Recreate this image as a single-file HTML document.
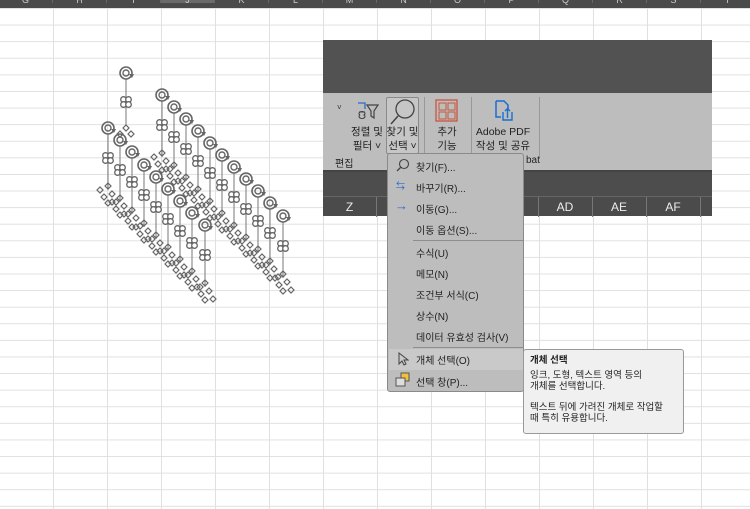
<!DOCTYPE html>
<html><head><meta charset="utf-8"><style>
*{margin:0;padding:0;box-sizing:border-box}
body{width:750px;height:509px;overflow:hidden;background:#fff;position:relative;font-family:"Liberation Sans","Noto Sans CJK KR",sans-serif;color:#222}
.grid{position:absolute;left:0;top:8px;width:750px;height:501px;
background-image:linear-gradient(90deg,#e0e0e0 1px,transparent 1px),linear-gradient(#e0e0e0 1px,transparent 1px);
background-size:54px 16.6px;background-position:-1px 0,0 0}
.colhdr{position:absolute;left:0;top:0;width:750px;height:8px;background:#4a4a4a;overflow:hidden;font-size:9px;color:#ccc}
.colhdr span{position:absolute;top:-5px;width:54px;text-align:center;border-right:1px solid #666;height:8px}
.abs{position:absolute}
.win{position:absolute;left:323px;top:40px;width:389px;height:176px;background:#525252}
.rib{position:absolute;left:0;top:53px;width:389px;height:77px;background:#bdbdbd}
.bar{position:absolute;left:0;top:130px;width:389px;height:26px;background:#4d4d4d;border-top:2px solid #444}
.hdr{position:absolute;left:0;top:156px;width:389px;height:20px;background:#4b4b4b;border-top:1px solid #666;color:#eee;font-size:12px}
.hdr span{position:absolute;top:3px;text-align:center}
.rt{font-size:10.5px;color:#222;text-align:center;line-height:14px;position:absolute}
.menu{position:absolute;left:387px;top:153px;width:137px;height:239px;background:#bdbdbd;border:1px solid #8a8a8a;border-radius:3px;font-size:10px;color:#222}
.mi{position:absolute;left:28px}
.sep{position:absolute;left:25px;width:110px;height:1px;background:#8e8e8e}
.tip{position:absolute;left:523px;top:349px;width:161px;height:85px;background:#f0f0f0;border:1px solid #999;border-radius:3px;font-size:9.5px;line-height:11px;color:#222;padding:5px 6px}
</style></head><body>
<div class="grid"></div>
<div class="colhdr">
<span style="left:-1px">G</span><span style="left:53px">H</span><span style="left:107px">I</span><span style="left:161px;background:#6a6a6a">J</span><span style="left:215px">K</span><span style="left:269px">L</span><span style="left:323px">M</span><span style="left:377px">N</span><span style="left:431px">O</span><span style="left:485px">P</span><span style="left:539px">Q</span><span style="left:593px">R</span><span style="left:647px">S</span><span style="left:701px">T</span>
</div>

<svg class="abs" style="left:0;top:0" width="320" height="320" viewBox="0 0 320 320">
<defs>
<g id="rot"><circle r="6" fill="none" stroke="#666" stroke-width="1.6"/><circle r="3" fill="none" stroke="#666" stroke-width="1.4"/><path d="M3 1 L8 1 L6 5Z" fill="#666"/></g>
<g id="knob"><circle cx="-2.5" cy="-2.5" r="2.8" fill="#fff" stroke="#666" stroke-width="1.3"/><circle cx="2.5" cy="-2.5" r="2.8" fill="#fff" stroke="#666" stroke-width="1.3"/><circle cx="-2.5" cy="2.5" r="2.8" fill="#fff" stroke="#666" stroke-width="1.3"/><circle cx="2.5" cy="2.5" r="2.8" fill="#fff" stroke="#666" stroke-width="1.3"/></g>
<g id="ar"><path d="M-3 0 L0 -3 L3 0 L0 3Z" fill="none" stroke="#666" stroke-width="1.2"/></g>
<g id="item"><line x1="0" y1="6" x2="0" y2="62" stroke="#777" stroke-width="1"/><use href="#rot"/><use href="#knob" y="30"/>
<use href="#ar" x="-8" y="62"/><use href="#ar" x="0" y="58"/><use href="#ar" x="-4" y="69"/><use href="#ar" x="4" y="66"/><use href="#ar" x="8" y="74"/><use href="#ar" x="0" y="75"/></g>
</defs>
<line x1="126" y1="79" x2="126" y2="125" stroke="#777"/><use href="#rot" x="126" y="73"/><use href="#knob" x="126" y="102"/><use href="#ar" x="126" y="128"/><use href="#ar" x="120" y="134"/><use href="#ar" x="131" y="134"/>
<use href="#item" x="108" y="128"/><use href="#item" x="120" y="140"/><use href="#item" x="132" y="152"/><use href="#item" x="144" y="165"/><use href="#item" x="156" y="177"/><use href="#item" x="168" y="189"/><use href="#item" x="180" y="201"/><use href="#item" x="192" y="213"/><use href="#item" x="205" y="225"/>
<use href="#item" x="162" y="95"/><use href="#item" x="174" y="107"/><use href="#item" x="186" y="119"/><use href="#item" x="198" y="131"/><use href="#item" x="210" y="143"/><use href="#item" x="222" y="155"/><use href="#item" x="234" y="167"/><use href="#item" x="246" y="179"/><use href="#item" x="258" y="191"/><use href="#item" x="270" y="203"/><use href="#item" x="283" y="216"/>
</svg>

<div class="win">
<div class="rib">
<div class="abs" style="left:14px;top:10px;font-size:8px;color:#333">˅</div>
<svg class="abs" style="left:33px;top:7px" width="24" height="22"><path d="M2 3h7v6" fill="none" stroke="#2a6bc4" stroke-width="1.3"/><path d="M3 12h6 M4 15a3 2 0 1 0 4 0a3 2 0 1 0-4 0" fill="none" stroke="#444" stroke-width="1.1"/><path d="M11 5h11l-4 6v7l-3-2v-5z" fill="none" stroke="#444" stroke-width="1.2"/></svg>
<div class="rt" style="left:26px;top:32px;width:36px">정렬 및<br>필터 ˅</div>
<div class="abs" style="left:63px;top:4px;width:33px;height:57px;border:1px solid #8a8a8a;border-radius:2px;background:#c6c6c6"></div>
<svg class="abs" style="left:66px;top:5px" width="28" height="28"><circle cx="16" cy="11" r="9" fill="none" stroke="#444" stroke-width="1.3"/><line x1="9" y1="18" x2="2" y2="26" stroke="#444" stroke-width="1.5"/></svg>
<div class="rt" style="left:62px;top:32px;width:35px">찾기 및<br>선택 ˅</div>
<div class="abs" style="left:101px;top:4px;width:1px;height:62px;background:#999"></div>
<svg class="abs" style="left:112px;top:6px" width="24" height="24"><rect x="1" y="1" width="21" height="21" fill="none" stroke="#c8553d" stroke-width="1.3"/><rect x="4" y="4" width="7" height="7" fill="none" stroke="#c8553d"/><rect x="13" y="4" width="7" height="7" fill="none" stroke="#c8553d"/><rect x="4" y="13" width="7" height="7" fill="none" stroke="#c8553d"/><rect x="13" y="13" width="7" height="7" fill="none" stroke="#c8553d"/></svg>
<div class="rt" style="left:107px;top:32px;width:34px">추가<br>기능</div>
<div class="abs" style="left:148px;top:4px;width:1px;height:62px;background:#999"></div>
<svg class="abs" style="left:170px;top:6px" width="22" height="24"><path d="M3 2h8l4 4v4 M3 2v16h5" fill="none" stroke="#1a6fd1" stroke-width="1.5"/><path d="M10 13v8h9v-8 M14.5 19v-9 M12 12l2.5-2.5 2.5 2.5" fill="none" stroke="#1a6fd1" stroke-width="1.4"/></svg>
<div class="rt" style="left:150px;top:32px;width:60px">Adobe PDF<br>작성 및 공유</div>
<div class="abs" style="left:216px;top:4px;width:1px;height:62px;background:#999"></div>
<div class="abs" style="left:12px;top:62px;font-size:10px;color:#222">편집</div>
<div class="abs" style="left:203px;top:62px;font-size:10px;color:#222">bat</div>
</div>
<div class="bar"></div>
<div class="hdr">
<span style="left:0;width:53px">Z</span>
<span style="left:53px;width:1px;height:20px;top:0;background:#777"></span>
<span style="left:215px;width:54px">AD</span><span style="left:215px;width:1px;height:20px;top:0;background:#777"></span>
<span style="left:269px;width:54px">AE</span><span style="left:269px;width:1px;height:20px;top:0;background:#777"></span>
<span style="left:323px;width:54px">AF</span><span style="left:323px;width:1px;height:20px;top:0;background:#777"></span>
<span style="left:377px;width:1px;height:20px;top:0;background:#777"></span>
</div>
</div>

<div class="menu">
<svg class="abs" style="left:8px;top:4px" width="14" height="14"><circle cx="8" cy="6" r="4.5" fill="none" stroke="#444" stroke-width="1.1"/><line x1="5" y1="9" x2="1" y2="13" stroke="#444" stroke-width="1.3"/></svg>
<div class="mi" style="top:5px">찾기(F)...</div>
<div class="abs" style="left:8px;top:25px;font-size:9px;color:#2a6bc4">⇆</div>
<div class="mi" style="top:26px">바꾸기(R)...</div>
<div class="abs" style="left:7px;top:44px;font-size:13px;color:#2a6bc4">→</div>
<div class="mi" style="top:47px">이동(G)...</div>
<div class="mi" style="top:68px">이동 옵션(S)...</div>
<div class="sep" style="top:86px"></div>
<div class="mi" style="top:91px">수식(U)</div>
<div class="mi" style="top:112px">메모(N)</div>
<div class="mi" style="top:133px">조건부 서식(C)</div>
<div class="mi" style="top:154px">상수(N)</div>
<div class="mi" style="top:175px">데이터 유효성 검사(V)</div>
<div class="sep" style="top:193px"></div>
<div class="abs" style="left:1px;top:195px;width:134px;height:21px;background:#c9c9c9"></div>
<svg class="abs" style="left:9px;top:198px" width="12" height="14"><path d="M2 1v11l3-3 2 4 2-1-2-4h4z" fill="none" stroke="#444" stroke-width="1"/></svg>
<div class="mi" style="top:198px">개체 선택(O)</div>
<svg class="abs" style="left:7px;top:218px" width="16" height="16"><rect x="6" y="1" width="8" height="8" fill="#f0c040" stroke="#555"/><rect x="1" y="6" width="9" height="8" fill="#ddd" stroke="#555"/></svg>
<div class="mi" style="top:220px">선택 창(P)...</div>
</div>

<div class="tip"><b>개체 선택</b><br><div style="height:4px"></div>잉크, 도형, 텍스트 영역 등의<br>개체를 선택합니다.<br><div style="height:10px"></div>텍스트 뒤에 가려진 개체로 작업할<br>때 특히 유용합니다.</div>
</body></html>
